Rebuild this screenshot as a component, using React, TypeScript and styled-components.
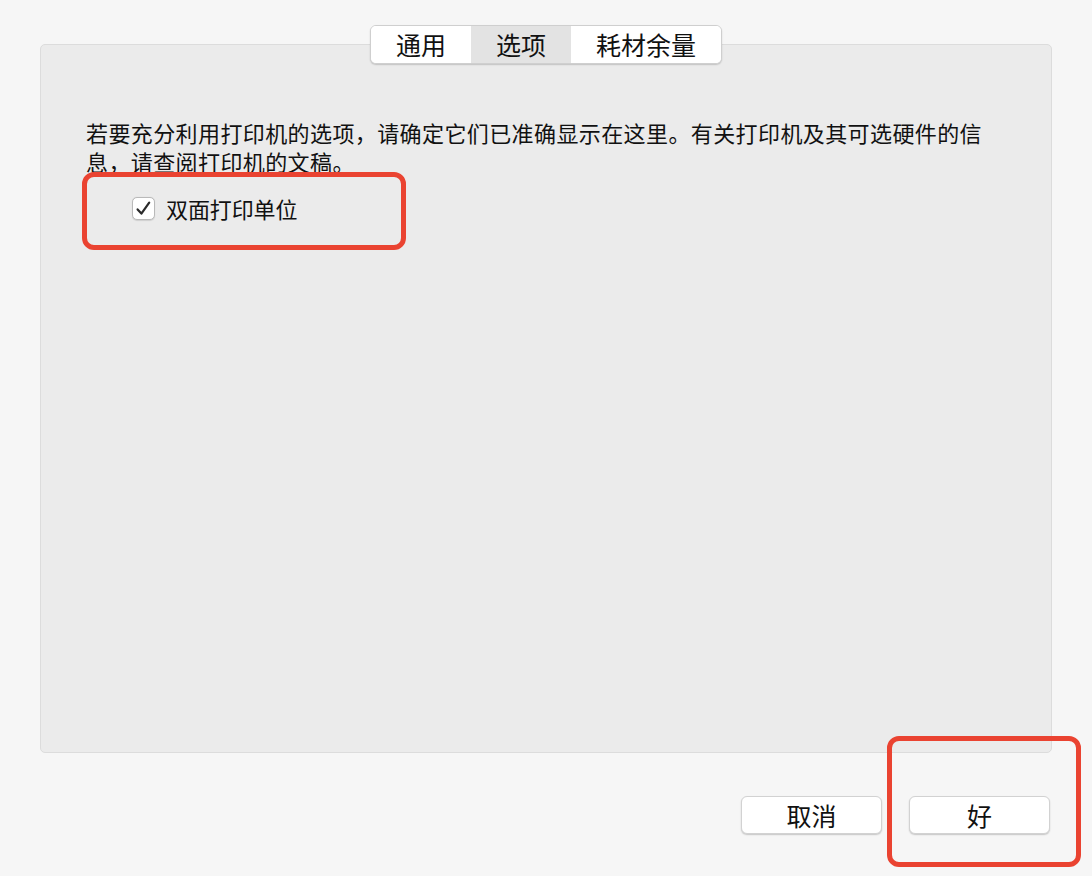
import * as React from 'react';
import styled, { createGlobalStyle } from 'styled-components';

const GlobalStyle = createGlobalStyle`
  html, body {
    margin: 0;
    padding: 0;
    background: #f6f6f6;
  }
  body {
    font-family: "Noto Sans CJK SC", "Noto Sans", sans-serif;
    color: #111;
  }
`;

const Window = styled.div`
  width: 1092px;
  height: 876px;
  box-sizing: border-box;
  padding: 25px 40px 0 40px;
  display: flex;
  flex-direction: column;
  background: #f6f6f6;
  overflow: hidden;
`;

const TabBar = styled.div`
  align-self: center;
  position: relative;
  z-index: 1;
  display: flex;
  height: 39px;
  box-sizing: border-box;
  margin-bottom: -20px;
  background: #fff;
  border: 1px solid #cfcfcf;
  border-radius: 6px;
  box-shadow: 0 1px 1.5px rgba(0, 0, 0, 0.18);
  overflow: hidden;
`;

const Tab = styled.div<{ $active?: boolean }>`
  display: flex;
  align-items: center;
  justify-content: center;
  padding: 0 25px;
  font-size: 25px;
  line-height: 1;
  background: ${(p) => (p.$active ? '#e3e3e3' : '#fff')};
  color: #111;
`;

const Panel = styled.div`
  height: 709px;
  box-sizing: border-box;
  background: #ebebeb;
  border: 1px solid #dcdcdc;
  border-radius: 5px;
  padding: 73px 45px 0 45px;
`;

const Intro = styled.p`
  margin: 0;
  width: 910px;
  font-size: 22px;
  line-height: 29px;
  letter-spacing: 0.4px;
`;

const OptionRow = styled.label`
  position: relative;
  display: inline-flex;
  align-items: center;
  height: 24px;
  margin: 20px 0 0 46px;
  font-size: 22px;
  letter-spacing: -0.1px;
`;

const CheckBox = styled.span`
  display: inline-flex;
  align-items: center;
  justify-content: center;
  width: 23px;
  height: 23px;
  box-sizing: border-box;
  background: #fff;
  border: 1px solid #b9b9b9;
  border-radius: 5px;
  box-shadow: 0 0.5px 1px rgba(0, 0, 0, 0.12);
  margin-right: 11px;
`;

const Highlight = styled.span<{ $inset: string }>`
  position: absolute;
  inset: ${(p) => p.$inset};
  border: 5px solid #ea4331;
  border-radius: 12px;
  pointer-events: none;
`;

const Footer = styled.div`
  display: flex;
  justify-content: flex-end;
  gap: 27px;
  margin-top: 43px;
  padding-right: 2px;
`;

const Button = styled.button`
  position: relative;
  width: 141px;
  height: 38px;
  box-sizing: border-box;
  background: #fff;
  border: 1px solid #d2d2d2;
  border-radius: 6px;
  box-shadow: 0 1px 1.5px rgba(0, 0, 0, 0.2);
  font-family: "Noto Sans CJK SC", "Noto Sans", sans-serif;
  font-size: 25px;
  line-height: 1;
  color: #111;
  padding: 0;
  display: flex;
  align-items: center;
  justify-content: center;
`;

const tabs = ['通用', '选项', '耗材余量'];

export default function App() {
  return (
    <>
      <GlobalStyle />
      <Window>
        <TabBar>
          {tabs.map((t) => (
            <Tab key={t} $active={t === '选项'}>
              {t}
            </Tab>
          ))}
        </TabBar>
        <Panel>
          <Intro>
            若要充分利用打印机的选项，请确定它们已准确显示在这里。有关打印机及其可选硬件的信息，请查阅打印机的文稿。
          </Intro>
          <OptionRow>
            <CheckBox>
              <svg width="17" height="17" viewBox="0 0 17 17">
                <path
                  d="M2.6 9.4 L6.4 13.6 L14.2 2.6"
                  fill="none"
                  stroke="#2a2a2a"
                  strokeWidth="2.2"
                  strokeLinecap="round"
                  strokeLinejoin="round"
                />
              </svg>
            </CheckBox>
            双面打印单位
            <Highlight $inset="-24px -109px -30px -50px" />
          </OptionRow>
        </Panel>
        <Footer>
          <Button>取消</Button>
          <Button>
            好
            <Highlight $inset="-61px -32px -34px -23px" />
          </Button>
        </Footer>
      </Window>
    </>
  );
}
